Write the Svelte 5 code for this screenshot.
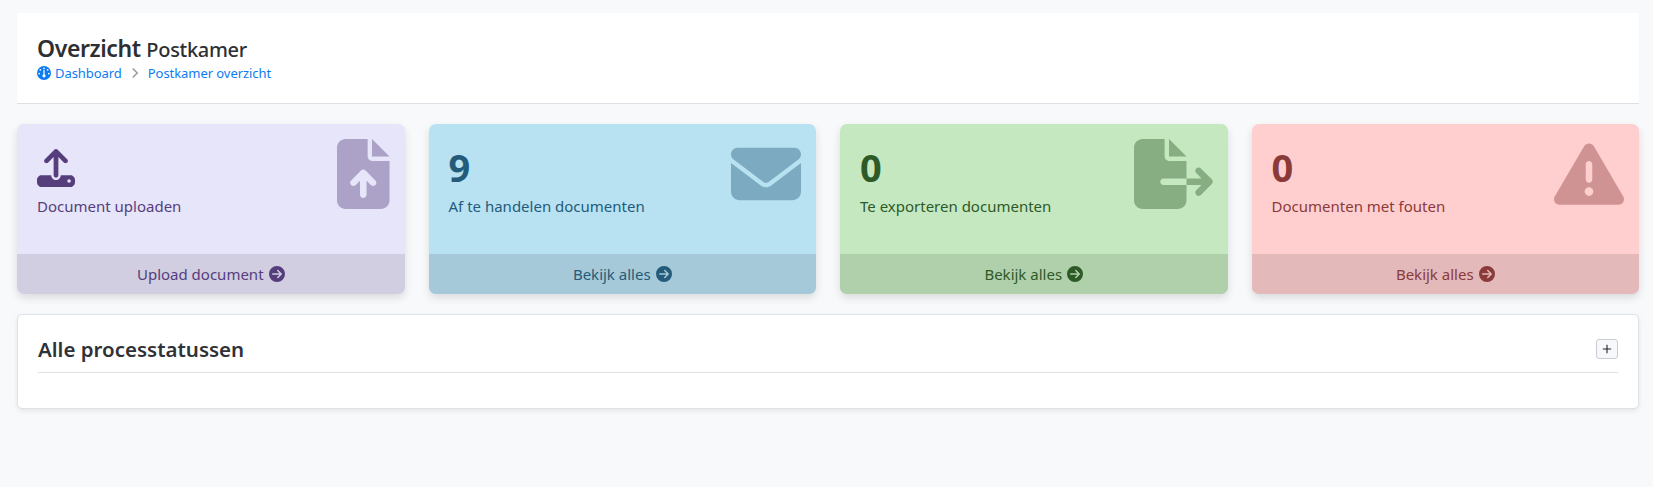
<script>
	const icons = {
		fileUp: { box: '0 0 384 512', d: 'M64 0C28.7 0 0 28.7 0 64V448c0 35.3 28.7 64 64 64H320c35.3 0 64-28.7 64-64V160H256c-17.7 0-32-14.3-32-32V0H64zM256 0V128H384L256 0zM216 408c0 13.3-10.7 24-24 24s-24-10.7-24-24V305.9l-31 31c-9.4 9.4-24.6 9.4-33.9 0s-9.4-24.6 0-33.9l72-72c9.4-9.4 24.6-9.4 33.9 0l72 72c9.4 9.4 9.4 24.6 0 33.9s-24.6 9.4-33.9 0l-31-31V408z' },
		envelope: { box: '0 0 512 512', d: 'M48 64C21.5 64 0 85.5 0 112c0 15.1 7.1 29.3 19.2 38.4L236.8 313.6c11.4 8.5 27 8.5 38.4 0L492.8 150.4c12.1-9.1 19.2-23.3 19.2-38.4c0-26.5-21.5-48-48-48H48zM0 176V384c0 35.3 28.7 64 64 64H448c35.3 0 64-28.7 64-64V176L294.4 339.2c-22.8 17.1-54 17.1-76.8 0L0 176z' },
		fileExport: { box: '0 0 576 512', d: 'M0 64C0 28.7 28.7 0 64 0H224V128c0 17.7 14.3 32 32 32H384V288H216c-13.3 0-24 10.7-24 24s10.7 24 24 24H384V448c0 35.3-28.7 64-64 64H64c-35.3 0-64-28.7-64-64V64zM384 336V288H494.1l-39-39c-9.4-9.4-9.4-24.6 0-33.9s24.6-9.4 33.9 0l80 80c9.4 9.4 9.4 24.6 0 33.9l-80 80c-9.4 9.4-24.6 9.4-33.9 0s-9.4-24.6 0-33.9l39-39H384zm0-208H256V0L384 128z' },
		warning: { box: '0 0 512 512', d: 'M256 32c14.2 0 27.3 7.5 34.5 19.8l216 368c7.3 12.4 7.3 27.7 .2 40.1S486.3 480 472 480H40c-14.3 0-27.6-7.7-34.7-20.1s-7-27.8 .2-40.1l216-368C228.7 39.5 241.8 32 256 32zm0 128c-13.3 0-24 10.7-24 24V296c0 13.3 10.7 24 24 24s24-10.7 24-24V184c0-13.3-10.7-24-24-24zm32 224a32 32 0 1 0 -64 0 32 32 0 1 0 64 0z' }
	};
	const upload = 'M288 109.3V352c0 17.7-14.3 32-32 32s-32-14.3-32-32V109.3l-73.4 73.4c-12.5 12.5-32.8 12.5-45.3 0s-12.5-32.8 0-45.3l128-128c12.5-12.5 32.8-12.5 45.3 0l128 128c12.5 12.5 12.5 32.8 0 45.3s-32.8 12.5-45.3 0L288 109.3zM64 352H192c0 35.3 28.7 64 64 64s64-28.7 64-64H448c35.3 0 64 28.7 64 64v32c0 35.3-28.7 64-64 64H64c-35.3 0-64-28.7-64-64V416c0-35.3 28.7-64 64-64zM432 456a24 24 0 1 0 0-48 24 24 0 1 0 0 48z';
	const arrow = 'M0 256a256 256 0 1 0 512 0A256 256 0 1 0 0 256zM297 385c-9.4 9.4-24.6 9.4-33.9 0s-9.4-24.6 0-33.9l71-71L120 280c-13.3 0-24-10.7-24-24s10.7-24 24-24l214.1 0-71-71c-9.4-9.4-9.4-24.6 0-33.9s24.6-9.4 33.9 0L409 239c9.4 9.4 9.4 24.6 0 33.9L297 385z';

	const cards = [
		{ tone: 'purple', label: 'Document uploaden', link: 'Upload document', icon: icons.fileUp },
		{ tone: 'blue', value: 9, label: 'Af te handelen documenten', link: 'Bekijk alles', icon: icons.envelope },
		{ tone: 'green', value: 0, label: 'Te exporteren documenten', link: 'Bekijk alles', icon: icons.fileExport },
		{ tone: 'red', value: 0, label: 'Documenten met fouten', link: 'Bekijk alles', icon: icons.warning }
	];
</script>

<div class="page">
	<header class="page-header">
		<h1>Overzicht <small>Postkamer</small></h1>
		<nav class="crumbs">
			<a href="#dashboard">
				<svg class="gauge" viewBox="0 0 16 16">
					<circle cx="8" cy="8" r="8" fill="#0d7bf2" />
					<g fill="#fff">
						<circle cx="8" cy="2.6" r="1" />
						<circle cx="3.8" cy="4.4" r="1" />
						<circle cx="12.2" cy="4.4" r="1" />
						<circle cx="2.5" cy="8.6" r="1" />
						<circle cx="13.5" cy="8.6" r="1" />
						<circle cx="8" cy="11.2" r="1.8" />
					</g>
					<path d="M8 5v6" stroke="#fff" stroke-width="1.4" stroke-linecap="round" />
				</svg>
				Dashboard
			</a>
			<svg class="sep" viewBox="0 0 10 16"><path d="M2 2l6 6-6 6" /></svg>
			<a href="#overzicht">Postkamer overzicht</a>
		</nav>
	</header>

	<section class="cards">
		{#each cards as card}
			<article class="card {card.tone}">
				<div class="card-body">
					<div class="card-text">
						{#if card.value !== undefined}
							<div class="value">{card.value}</div>
						{:else}
							<svg class="upload" viewBox="0 0 512 512"><path d={upload} /></svg>
						{/if}
						<p>{card.label}</p>
					</div>
					<svg class="bg-icon" viewBox={card.icon.box}><path d={card.icon.d} /></svg>
				</div>
				<a class="card-foot" href="#details">
					{card.link}
					<svg viewBox="0 0 512 512"><path d={arrow} /></svg>
				</a>
			</article>
		{/each}
	</section>

	<section class="panel">
		<div class="panel-head">
			<h2>Alle processtatussen</h2>
			<button type="button" aria-label="Uitklappen">
				<svg viewBox="0 0 12 12"><path d="M6 1v10M1 6h10" /></svg>
			</button>
		</div>
	</section>
</div>

<style>
	:global(body) {
		background: #f8f9fb;
		font-family: "Noto Sans", "Open Sans", sans-serif;
	}

	.page {
		padding: 13px 14px 0 17px;
		height: 474px;
		overflow: hidden;
	}

	.page-header {
		background: #fff;
		height: 91px;
		box-sizing: border-box;
		padding: 21px 20px 0;
		border-bottom: 1px solid #dcdfe4;
	}

	h1 {
		margin: 0;
		font-size: 23px;
		line-height: 28px;
		font-weight: 600;
		color: #2d2f33;
		letter-spacing: -0.4px;
	}

	h1 small {
		font-size: 20px;
		font-weight: 500;
		letter-spacing: -0.3px;
	}

	.crumbs {
		display: flex;
		align-items: center;
		font-size: 13px;
		line-height: 18px;
		letter-spacing: -0.06px;
	}

	.crumbs a {
		color: #0d7bf2;
		text-decoration: none;
		display: flex;
		align-items: center;
		gap: 4px;
	}

	.gauge {
		width: 14px;
		height: 14px;
	}

	.sep {
		width: 8px;
		height: 12px;
		margin: 0 9px;
		fill: none;
		stroke: #9a9a9a;
		stroke-width: 2;
	}

	.cards {
		display: grid;
		grid-template-columns: repeat(4, 1fr);
		gap: 24px;
		margin-top: 20px;
	}

	.card {
		height: 170px;
		border-radius: 7px;
		overflow: hidden;
		display: flex;
		flex-direction: column;
		color: var(--ink);
		background: var(--bg);
		box-shadow: 0 4px 8px rgba(0, 0, 0, 0.12);
	}

	.purple { --ink: #563d7c; --bg: #e6e5f9; --foot: #d0cee0; }
	.blue { --ink: #245b7a; --bg: #b8e2f2; --foot: #a5c9d8; }
	.green { --ink: #2d5a27; --bg: #c5e8c1; --foot: #b0cfab; }
	.red { --ink: #8b3a3a; --bg: #ffcfcf; --foot: #e3b9b9; }

	.card-body {
		flex: 1;
		display: flex;
		justify-content: space-between;
		padding: 15px 15px 0 20px;
	}

	.card-text {
		display: flex;
		flex-direction: column;
	}

	.value {
		margin-top: 8px;
		height: 40px;
		font-size: 38px;
		line-height: 40px;
		font-weight: 700;
	}

	.upload {
		margin-top: 10px;
		width: 38px;
		height: 38px;
		fill: var(--ink);
	}

	.card p {
		margin: 8px 0 0;
		font-size: 15px;
		line-height: 22px;
	}

	.bg-icon {
		height: 70px;
		width: auto;
		flex: none;
		fill: var(--ink);
		opacity: 0.4;
	}

	.card-foot {
		height: 40px;
		display: flex;
		align-items: center;
		justify-content: center;
		gap: 5px;
		background: var(--foot);
		color: var(--ink);
		font-size: 15px;
		text-decoration: none;
	}

	.card-foot svg {
		width: 16px;
		height: 16px;
		fill: var(--ink);
	}

	.panel {
		margin-top: 20px;
		height: 95px;
		box-sizing: border-box;
		background: #fff;
		border: 1px solid #dee2e6;
		border-radius: 5px;
		box-shadow: 0 2px 5px rgba(0, 0, 0, 0.08);
		padding: 0 20px;
	}

	.panel-head {
		height: 57px;
		display: flex;
		align-items: center;
		justify-content: space-between;
		border-bottom: 1px solid #dee2e6;
	}

	h2 {
		margin: 10px 0 0;
		font-size: 20.5px;
		font-weight: 600;
		color: #2f3237;
	}

	button {
		width: 22px;
		height: 20px;
		padding: 0;
		background: #f6f8fb;
		border: 1px solid #c9ccd1;
		border-radius: 3px;
		display: flex;
		align-items: center;
		justify-content: center;
		margin: 11px 0 0 0;
	}

	button svg {
		width: 10px;
		height: 10px;
		fill: none;
		stroke: #222;
		stroke-width: 1.3;
	}
</style>
